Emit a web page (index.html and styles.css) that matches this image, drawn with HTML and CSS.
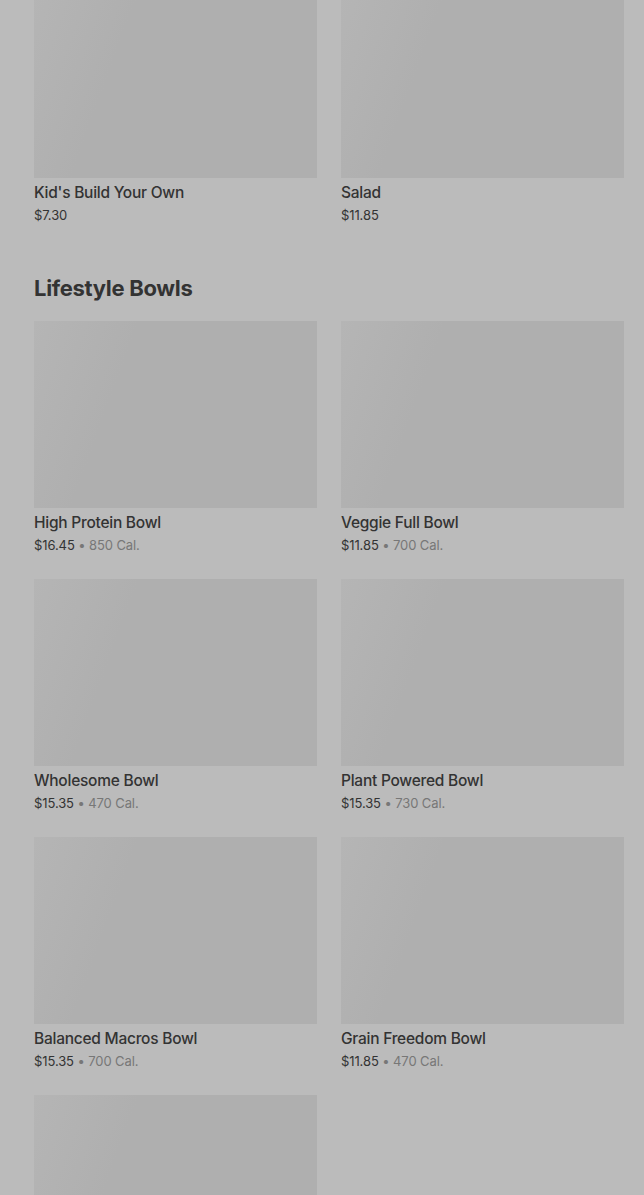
FILE: index.html
```html
<!DOCTYPE html>
<html lang="en">
<head>
  <meta charset="UTF-8" />
  <meta name="viewport" content="width=device-width, initial-scale=1.0" />
  <title>Menu</title>
  <link rel="stylesheet" href="styles.css">
</head>
<body>
  <div class="page">
    <section class="section section-top">
      <div class="grid">
        <div class="item">
          <div class="thumb"></div>
          <div class="name">Kid's Build Your Own</div>
          <div class="meta">$7.30</div>
        </div>
        <div class="item">
          <div class="thumb"></div>
          <div class="name">Salad</div>
          <div class="meta">$11.85</div>
        </div>
      </div>
    </section>

    <section class="section">
      <h2>Lifestyle Bowls</h2>
      <div class="grid">
        <div class="item">
          <div class="thumb"></div>
          <div class="name">High Protein Bowl</div>
          <div class="meta">$16.45 <span class="cal">• 850 Cal.</span></div>
        </div>
        <div class="item">
          <div class="thumb"></div>
          <div class="name">Veggie Full Bowl</div>
          <div class="meta">$11.85 <span class="cal">• 700 Cal.</span></div>
        </div>
        <div class="item">
          <div class="thumb"></div>
          <div class="name">Wholesome Bowl</div>
          <div class="meta">$15.35 <span class="cal">• 470 Cal.</span></div>
        </div>
        <div class="item">
          <div class="thumb"></div>
          <div class="name">Plant Powered Bowl</div>
          <div class="meta">$15.35 <span class="cal">• 730 Cal.</span></div>
        </div>
        <div class="item">
          <div class="thumb"></div>
          <div class="name">Balanced Macros Bowl</div>
          <div class="meta">$15.35 <span class="cal">• 700 Cal.</span></div>
        </div>
        <div class="item">
          <div class="thumb"></div>
          <div class="name">Grain Freedom Bowl</div>
          <div class="meta">$11.85 <span class="cal">• 470 Cal.</span></div>
        </div>
        <div class="item">
          <div class="thumb"></div>
        </div>
      </div>
    </section>
  </div>
</body>
</html>
```

FILE: styles.css
```css
:root {
  --bg: #bbbbbb;
  --thumb: #afafaf;
  --text: #333333;
  --muted: #777777;
}

* {
  box-sizing: border-box;
}

body {
  margin: 0;
  background-color: var(--bg);
  color: var(--text);
  font-family: Inter, 'Noto Sans', Arial, sans-serif;
  overflow: hidden;
}

.page {
  padding: 0 20px 0 34px;
}

/* list is scrolled a little, first row's photos are cut at the top */
.section-top {
  margin-top: -9px;
}

.section h2 {
  margin: 50px 0 19px;
  font-size: 22px;
  line-height: 28px;
  font-weight: 700;
  letter-spacing: -0.3px;
}

.grid {
  display: grid;
  grid-template-columns: 1fr 1fr;
  column-gap: 24px;
  row-gap: 25px;
}

.thumb {
  height: 187px;
  background: linear-gradient(110deg, #b5b5b5 0%, var(--thumb) 30%, var(--thumb) 100%);
}

.name {
  margin-top: 5px;
  font-size: 15.5px;
  line-height: 20px;
  font-weight: 500;
  letter-spacing: -0.25px;
}

.meta {
  margin-top: 3px;
  font-size: 13px;
  line-height: 18px;
  letter-spacing: -0.1px;
}

.cal {
  color: var(--muted);
}
```
